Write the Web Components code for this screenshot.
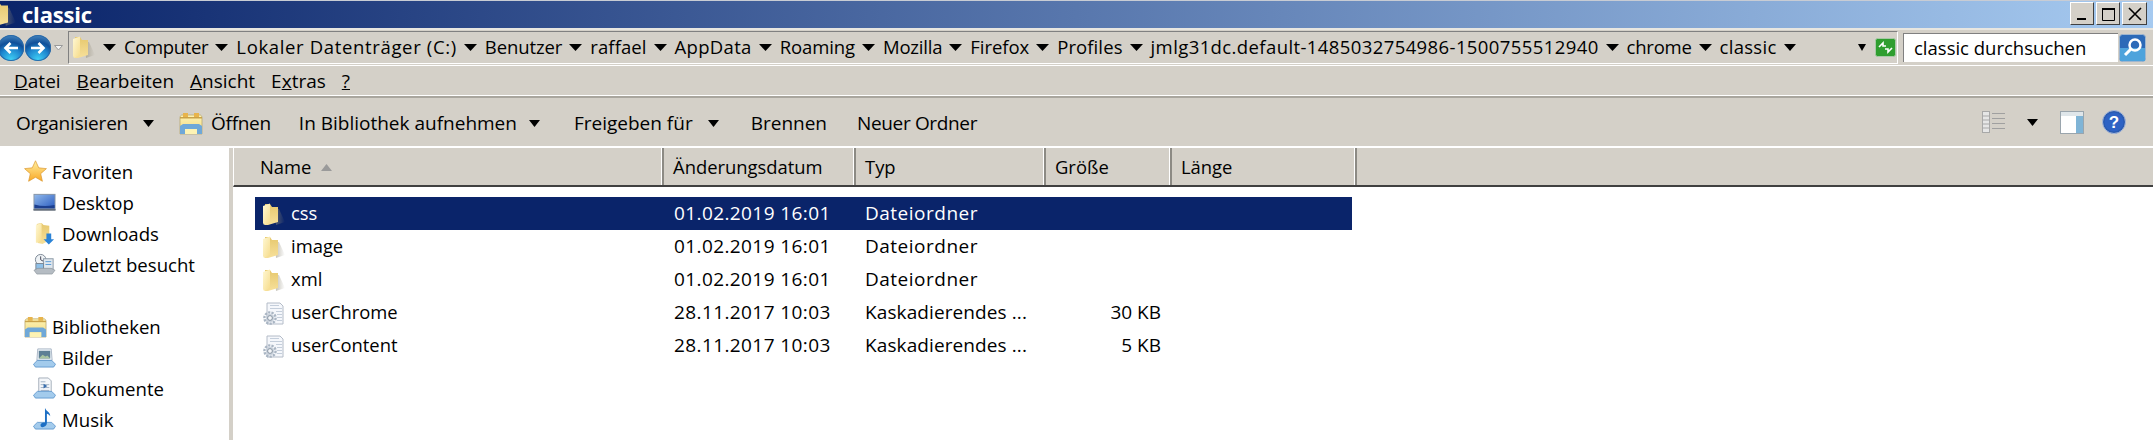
<!doctype html>
<html>
<head>
<meta charset="utf-8">
<title>classic</title>
<style>
  html,body{ margin:0; padding:0; height:440px; overflow:hidden; background:#d4d0c8; }
  body{ font-family:"Open Sans","Noto Sans","Liberation Sans",sans-serif; color:#000; display:flex; flex-direction:column; }
  win-menubar span{ display:block; }
</style>
</head>
<body>
  <win-titlebar>classic</win-titlebar>
  <win-addressbar crumbs="Computer:-.35|Lokaler Datenträger (C:):.65|Benutzer:-.1|raffael:.1|AppData:.3|Roaming:-.1|Mozilla:-.2|Firefox:-.05|Profiles:.1|jmlg31dc.default-1485032754986-1500755512940:.4|chrome:-.25|classic:.3" placeholder="classic durchsuchen"></win-addressbar>
  <win-menubar>
    <span><u>D</u>atei</span><span><u>B</u>earbeiten</span><span><u>A</u>nsicht</span><span>E<u>x</u>tras</span><span><u>?</u></span>
  </win-menubar>
  <win-toolbar></win-toolbar>
  <win-body>
    <win-sidebar slot="side">
      <nav-item head icon="star">Favoriten</nav-item>
      <nav-item icon="desktop">Desktop</nav-item>
      <nav-item icon="downloads">Downloads</nav-item>
      <nav-item icon="recent" last>Zuletzt besucht</nav-item>
      <nav-item head icon="library">Bibliotheken</nav-item>
      <nav-item icon="pictures">Bilder</nav-item>
      <nav-item icon="docs">Dokumente</nav-item>
      <nav-item icon="music">Musik</nav-item>
    </win-sidebar>
    <file-list slot="main">
      <file-row selected icon="folder" name="css" date="01.02.2019 16:01" type="Dateiordner"></file-row>
      <file-row icon="folder" name="image" date="01.02.2019 16:01" type="Dateiordner"></file-row>
      <file-row icon="folder" name="xml" date="01.02.2019 16:01" type="Dateiordner"></file-row>
      <file-row icon="css" name="userChrome" date="28.11.2017 10:03" type="Kaskadierendes ..." size="30 KB"></file-row>
      <file-row icon="css" name="userContent" date="28.11.2017 10:03" type="Kaskadierendes ..." size="5 KB"></file-row>
    </file-list>
  </win-body>

<script>
(function(){
  // Symbole als Inline-SVG, alle auf 24x24
  const defs = `
    <linearGradient id="fy" x1="0" y1="0" x2="1" y2="1"><stop offset="0" stop-color="#fff8d4"/><stop offset="1" stop-color="#f6dc8c"/></linearGradient>
    <linearGradient id="fb" x1="0" y1="0" x2="0" y2="1"><stop offset="0" stop-color="#e6c86e"/><stop offset="1" stop-color="#f7e09a"/></linearGradient>
    <linearGradient id="fs" x1="0" y1="0" x2="1" y2="0"><stop offset="0" stop-color="#8f8a78" stop-opacity=".55"/><stop offset="1" stop-color="#8f8a78" stop-opacity="0"/></linearGradient>
    <linearGradient id="scr" x1="0" y1="0" x2="1" y2="1"><stop offset="0" stop-color="#8fb7ea"/><stop offset="1" stop-color="#2a5cc0"/></linearGradient>
    <linearGradient id="lib" x1="0" y1="0" x2="0" y2="1"><stop offset="0" stop-color="#fdf3b4"/><stop offset="1" stop-color="#f3d77c"/></linearGradient>
    <linearGradient id="st" x1="0" y1="0" x2="0" y2="1"><stop offset="0" stop-color="#fff0a0"/><stop offset="1" stop-color="#f9a825"/></linearGradient>`;
  const FOLDER = `<path d="M13 6h4l6 13-9 3z" fill="url(#fs)"/><path d="M3 1h5l2 3h6v15l-10 3H3z" fill="url(#fb)"/><path d="M1 3l7-2.500V19l-6 3-1-2z" fill="url(#fy)"/>`;
  const ICONS = {
    folder: FOLDER,
    css: `<path d="M5 1h13l3 3v18H5z" fill="#f5f7fb" stroke="#b4bcc8"/><path d="M8 3.500h9M8 6.500h12M14 9.500h6M15 12.500h5M15 15.500h5M15 18.500h5" stroke="#c4cedb"/><circle cx="8" cy="16" r="5.600" fill="none" stroke="#a9b5c3" stroke-width="2.400" stroke-dasharray="2.200 1.200"/><circle cx="8" cy="16" r="4.200" fill="#cbd3dd"/><circle cx="8" cy="16" r="2.400" fill="#f4f6f9" stroke="#7f8c9b" stroke-width=".9"/>`,
    star: `<path d="M12 .8l3.400 7.400 8 .8-6 5.300 1.800 7.900-7.200-4.200-7.200 4.200 1.800-7.900-6-5.300 8-.8z" fill="url(#st)" stroke="#d9952a" stroke-width=".7"/>`,
    desktop: `<rect x=".5" y="3" width="23" height="17" fill="#8b97a6"/><rect x="1.500" y="4" width="21" height="14" fill="url(#scr)"/><path d="M1.500 14c7 2 14 2 21 .5V18h-21z" fill="#1c3f8f"/><rect x=".5" y="19" width="23" height="1.500" fill="#5a6470"/>`,
    downloads: `<path d="M4 2l5-1 2 2 6 1v15l-7 4-5-1z" fill="url(#fb)"/><path d="M3 3l6-2v18l-5 3-1-1z" fill="url(#fy)"/><path d="M14 12h5v6h3l-5.500 5.500L11 18h3z" fill="#2b83d6"/>`,
    recent: `<circle cx="8" cy="7" r="5.500" fill="#eef2f5" stroke="#7b8794"/><path d="M8 3.500V7l2.500 1.500" stroke="#445" fill="none"/><rect x="11" y="6" width="10" height="11" fill="#dfe7ee" stroke="#8c99a6"/><path d="M13 9h6M13 12h6" stroke="#5a9bd5"/><rect x="3" y="11" width="8" height="6" fill="#8fc0e8" stroke="#7b8794"/><path d="M1 18l4-2h14l4 2-3 4H4z" fill="#b5bcc3" stroke="#838b93" stroke-width=".6"/>`,
    library: `<path d="M1 7c0-2 1-3 2-3h18c1 0 2 1 2 3v16H1z" fill="url(#lib)" stroke="#b9a870" stroke-width=".8"/><path d="M4 2h5v4H4zM15 2h5v4h-5z" fill="#e8b44c"/><rect x="1" y="6" width="22" height="1.500" fill="#c9a24a"/><path d="M1 15l3-2h16l3 2v8h-5v-5H6v5H1z" fill="#6fa8d8"/><rect x="6" y="18" width="12" height="5" fill="#fdf3b4"/>`,
    pictures: `<path d="M5 3h14l1 12H4z" fill="#eef3f8" stroke="#8a9bb0" stroke-width=".7"/><rect x="6" y="5" width="12" height="8" fill="#5d7f95"/><path d="M6 13l4-4 3 2 2-1 3 3z" fill="#a8c4a0"/><path d="M.5 19l4-4h15l4 4-2 3H2.500z" fill="#a3cbec" stroke="#4e8cc8" stroke-width=".8"/>`,
    docs: `<path d="M6 1h10l3 3v13H6z" fill="#f5f7fa" stroke="#8d9aa9" stroke-width=".8"/><path d="M8 5h5M8 8h9M8 11h9M8 14h9" stroke="#9fb1c4"/><path d="M11 7l4 2.500-4 2.500z" fill="#3a6fae"/><path d="M.5 19l4-4h15l4 4-2 3H2.500z" fill="#a3cbec" stroke="#4e8cc8" stroke-width=".8"/>`,
    music: `<path d="M.5 19l4-4h15l4 4-2 3H2.500z" fill="#a3cbec" stroke="#4e8cc8" stroke-width=".8"/><path d="M13 .5c.5 3 5 3.500 5 8-1-1.500-2.500-2.500-3.500-2.500v10c0 2.500-2.500 4-4.500 4S7.500 18.500 8 17c.6-1.600 3-2.500 4.500-1.700V.5z" fill="#1d6fc4"/>`
  };
  const icon = (n, w=24, h=24) => `<svg width="${w}" height="${h}" viewBox="0 0 24 24" style="display:block;flex:none"><defs>${defs}</defs>${ICONS[n]||''}</svg>`;
  const FONT = `"Open Sans","Noto Sans","Liberation Sans",sans-serif`;
  const arrow = (w=13,c='#000') => `<svg width="${w}" height="7" viewBox="0 0 13 7" preserveAspectRatio="none" style="display:block;flex:none"><path d="M0 0h13L6.500 7z" fill="${c}"/></svg>`;
  const orbBg = 'radial-gradient(circle at 50% 95%,#3fd0f5 0,#1e86cf 40%,#0f4f99 62%,#5f9ed0 100%)';

  class Base extends HTMLElement {
    render(css, html){
      if (!this.shadowRoot) this.attachShadow({mode:'open'});
      this.shadowRoot.innerHTML = `<style>${css}</style>${html}`;
    }
  }

  class WinTitlebar extends Base {
    connectedCallback(){
      this.render(`
        :host{ display:flex; flex:none; height:30px; box-sizing:border-box; border-top:1px solid #c8ccd4; border-bottom:2px solid #e8e6e0; }
        .bar{ flex:1; display:flex; align-items:center; background:linear-gradient(90deg,#0a246a,#a6caf0); overflow:hidden; }
        .ic{ margin-left:-10px; margin-right:5px; }
        .t{ font:700 22px/1 ${FONT}; color:#fff; letter-spacing:-.2px; flex:1; margin-top:-2px; }
        .btns{ display:flex; gap:2px; margin-right:6px; margin-top:-2px; }
        .b{ width:24px; height:23px; background:#d4d0c8; border:1px solid; border-color:#fff #404040 #404040 #fff; box-sizing:border-box; display:flex; align-items:center; justify-content:center; }
        svg{ display:block; }
      `,`<div class="bar">
          <div class="ic">${icon('folder',27,27)}</div>
          <div class="t"><slot></slot></div>
          <div class="btns">
            <div class="b"><svg width="14" height="14"><rect x="2" y="11" width="9" height="2"/></svg></div>
            <div class="b"><svg width="14" height="14"><path d="M1.500 1.500h12v12h-12z" fill="none" stroke="#000"/><rect x="1" y="1" width="13" height="2"/></svg></div>
            <div class="b" style="width:25px"><svg width="16" height="16"><path d="M2 2l12 12M14 2L2 14" stroke="#000" stroke-width="1.600"/></svg></div>
          </div>
        </div>`);
    }
  }

  class WinAddressbar extends Base {
    connectedCallback(){
      // "Text:Laufweite" — Segoe UI hat andere Breiten, je Eintrag angeglichen
      const crumbs = (this.getAttribute('crumbs')||'').split('|').map(c=>{
        const i = c.lastIndexOf(':');
        return {t:c.slice(0,i), ls:c.slice(i+1)};
      });
      this.render(`
        :host{ display:flex; flex:none; height:35px; align-items:center; font:18.5px/1 ${FONT}; box-sizing:border-box; }
        .orb{ width:26px; height:26px; border-radius:50%; display:flex; align-items:center; justify-content:center; box-shadow:inset 0 0 0 1px #2b6aa8; flex:none; background:${orbBg}; }
        .orb svg{ display:block; }
        .nav{ display:flex; align-items:center; margin-left:-2px; }
        .nav .o2{ margin-left:1px; }
        .drop{ margin:0 5px 0 3px; }
        .path{ flex:none; width:1830px; height:33px; box-sizing:border-box; border:1px solid; border-color:#808080 #fff #fff #808080; display:flex; align-items:center; padding-left:3px; }
        .crumbs{ display:flex; align-items:center; flex:1; margin-left:7px; white-space:nowrap; }
        .crumbs span{ margin:0 7px 0 8px; }
        .end{ display:flex; align-items:center; gap:9px; padding-right:1px; }
        .search{ flex:none; width:215px; height:29px; margin-left:5px; background:#fff; box-sizing:border-box; border-left:1px solid #808080; border-top:1px solid #808080; padding-left:10px; display:flex; align-items:center; }
        .go{ flex:none; width:27px; height:28px; margin:0 6px 0 1px; }
      `,`
        <div class="nav">
          <div class="orb"><svg width="18" height="14"><path d="M16 7H4M8.500 2 3.500 7l5 5" fill="none" stroke="#fff" stroke-width="2.600"/></svg></div>
          <div class="orb o2"><svg width="18" height="14"><path d="M2 7h12M9.500 2l5 5-5 5" fill="none" stroke="#fff" stroke-width="2.600"/></svg></div>
          <div class="drop"><svg width="9" height="6" style="display:block"><path d="M.5.500h8L4.500 5z" fill="#f4f4f4" stroke="#9a9a9a"/></svg></div>
        </div>
        <div class="path">
          ${icon('folder',24,24)}
          <div class="crumbs">${crumbs.map(c=>`${arrow()}<span style="letter-spacing:${c.ls}px">${c.t}</span>`).join('')}${arrow(12)}</div>
          <div class="end">${arrow(8)}<svg width="21" height="19" style="display:block"><rect x=".5" y=".5" width="20" height="18" rx="2" fill="#2f9e2f" stroke="#a7c9a7"/><path d="M4 9l4-4v3h3M17 10l-4 4v-3h-3" stroke="#fff" stroke-width="1.600" fill="none"/></svg></div>
        </div>
        <div class="search">${this.getAttribute('placeholder')||''}</div>
        <div class="go"><svg width="27" height="28" style="display:block"><rect x=".5" y=".5" width="26" height="27" rx="3" fill="#2c6ab8" stroke="#9fb6cf"/><rect x="1" y="14" width="25" height="13" fill="#4ea3dc"/><circle cx="16" cy="11" r="5.500" fill="none" stroke="#fff" stroke-width="2.500"/><path d="M12 15l-6 6" stroke="#fff" stroke-width="3"/></svg></div>
      `);
    }
  }

  class WinMenubar extends Base {
    connectedCallback(){
      this.render(`
        :host{ display:flex; flex:none; height:33px; box-sizing:border-box; align-items:center; gap:16px; padding:0 0 0 14px; font:19px/1 ${FONT}; border-bottom:2px solid #a9a69e; box-shadow:inset 0 -1px #fff; white-space:nowrap; border-top:1px solid #fff; }
      `,`<slot></slot>`);
    }
  }

  class WinToolbar extends Base {
    connectedCallback(){
      this.render(`
        :host{ display:flex; flex:none; height:50px; box-sizing:border-box; align-items:center; padding:0 27px 0 16px; font:19px/1 ${FONT}; white-space:nowrap; border-bottom:2px solid #fff; }
        .left{ display:flex; align-items:center; flex:1; padding-top:2px; }
        .ic{ display:flex; margin-right:8px; }
        .right{ display:flex; align-items:center; }
        svg{ display:block; }
      `,`
        <div class="left">
          <span style="letter-spacing:-.2px">Organisieren</span><span style="margin:0 25px 0 15px">${arrow(11)}</span>
          <span class="ic">${icon('library',24,24)}</span><span style="letter-spacing:-.3px">Öffnen</span>
          <span style="margin-left:28px">In Bibliothek aufnehmen</span><span style="margin:0 34px 0 12px">${arrow(11)}</span>
          <span>Freigeben für</span><span style="margin:0 32px 0 15px">${arrow(11)}</span>
          <span>Brennen</span><span style="margin-left:30px;letter-spacing:-.35px">Neuer Ordner</span>
        </div>
        <div class="right">
          <svg width="24" height="22"><rect x=".5" y=".5" width="7" height="21" fill="#e6e6e6" stroke="#a8a8a8"/><path d="M1 5h6M1 9h6M1 13h6M1 17h6" stroke="#a8a8a8"/><path d="M10 2.500h13M10 7.500h13M10 12.500h13M10 17.500h13" stroke="#a0a0a0"/></svg>
          <span style="margin:0 22px 0 21px">${arrow(11)}</span>
          <svg width="24" height="23"><rect x=".5" y=".5" width="23" height="22" fill="#fff" stroke="#9aa5ad"/><rect x="16" y="1" width="7" height="21" fill="#7fb4d6"/><rect x="1" y="1" width="22" height="4" fill="#dfe6ea"/></svg>
          <svg width="24" height="24" style="margin-left:18px"><circle cx="12" cy="12" r="11.500" fill="#2a5bb0" stroke="#a8b8d8"/><circle cx="12" cy="12" r="9.500" fill="#2d62c4"/><text x="12" y="18" text-anchor="middle" font-family="Liberation Sans" font-weight="700" font-size="17" fill="#fff">?</text></svg>
        </div>
      `);
    }
  }

  class WinBody extends Base {
    connectedCallback(){
      this.render(`
        :host{ display:flex; flex:1; min-height:0; }
        ::slotted([slot=side]){ flex:none; width:229px; }
        ::slotted([slot=main]){ flex:1; margin-left:4px; }
      `,`<slot name="side"></slot><slot name="main"></slot>`);
    }
  }

  class WinSidebar extends Base {
    connectedCallback(){
      this.render(`
        :host{ display:block; background:#fff; padding-top:8px; box-sizing:border-box; font:18.6px/31px ${FONT}; }
      `,`<slot></slot>`);
    }
  }

  class NavItem extends Base {
    connectedCallback(){
      const head = this.hasAttribute('head');
      this.render(`
        :host{ display:flex; align-items:center; height:31px; padding-left:${head?24:33}px; gap:${head?5:6}px; white-space:nowrap; margin-bottom:${this.hasAttribute('last')?31:0}px; }
      `,`${icon(this.getAttribute('icon'),23,23)}<span><slot></slot></span>`);
    }
  }

  class FileList extends Base {
    connectedCallback(){
      this.render(`
        :host{ display:block; background:#fff; font:18.4px/1 ${FONT}; }
        .head{ display:flex; height:39px; box-sizing:border-box; background:#d4d0c8; border-bottom:2px solid #404040; border-left:1px solid #fff; }
        .c{ box-sizing:border-box; height:100%; display:flex; align-items:center; padding:2px 0 0 9px; border-right:2px solid #8c8a84; box-shadow:inset -1px 0 #fff; white-space:nowrap; }
        .name{ width:430px; padding-left:26px; gap:10px; }
        .name svg{ transform:scaleY(-1); }
        .rows{ padding:10px 0 0 22px; }
      `,`
        <div class="head">
          <div class="c name">Name ${arrow(11,'#9a9a9a')}</div>
          <div class="c" style="width:192px">Änderungsdatum</div>
          <div class="c" style="width:190px">Typ</div>
          <div class="c" style="width:126px">Größe</div>
          <div class="c" style="width:185px">Länge</div>
        </div>
        <div class="rows"><slot></slot></div>
      `);
    }
  }

  class FileRow extends Base {
    connectedCallback(){
      const a = n => this.getAttribute(n)||'';
      const sel = this.hasAttribute('selected');
      const tsp = a('type').startsWith('Datei') ? .5 : .1;
      this.render(`
        :host{ display:grid; grid-template-columns:419px 191px 195px 101px; width:1097px; height:33px; align-items:center; white-space:nowrap; color:${sel?'#fff':'#000'}; background:${sel?'#0a246a':'transparent'}; }
        .n{ display:flex; align-items:center; gap:5px; padding-left:7px; }
        .n svg{ margin-top:2px; }
        .d{ font-size:19px; letter-spacing:.4px; }
        .t{ font-size:19px; letter-spacing:${tsp}px; }
        .s{ font-size:19px; text-align:right; }
      `,`<div class="n">${icon(a('icon'),24,24)}<span>${a('name')}</span></div><div class="d">${a('date')}</div><div class="t">${a('type')}</div><div class="s">${a('size')}</div>`);
    }
  }

  customElements.define('win-titlebar', WinTitlebar);
  customElements.define('win-addressbar', WinAddressbar);
  customElements.define('win-menubar', WinMenubar);
  customElements.define('win-toolbar', WinToolbar);
  customElements.define('win-body', WinBody);
  customElements.define('win-sidebar', WinSidebar);
  customElements.define('nav-item', NavItem);
  customElements.define('file-list', FileList);
  customElements.define('file-row', FileRow);
})();
</script>
</body>
</html>
